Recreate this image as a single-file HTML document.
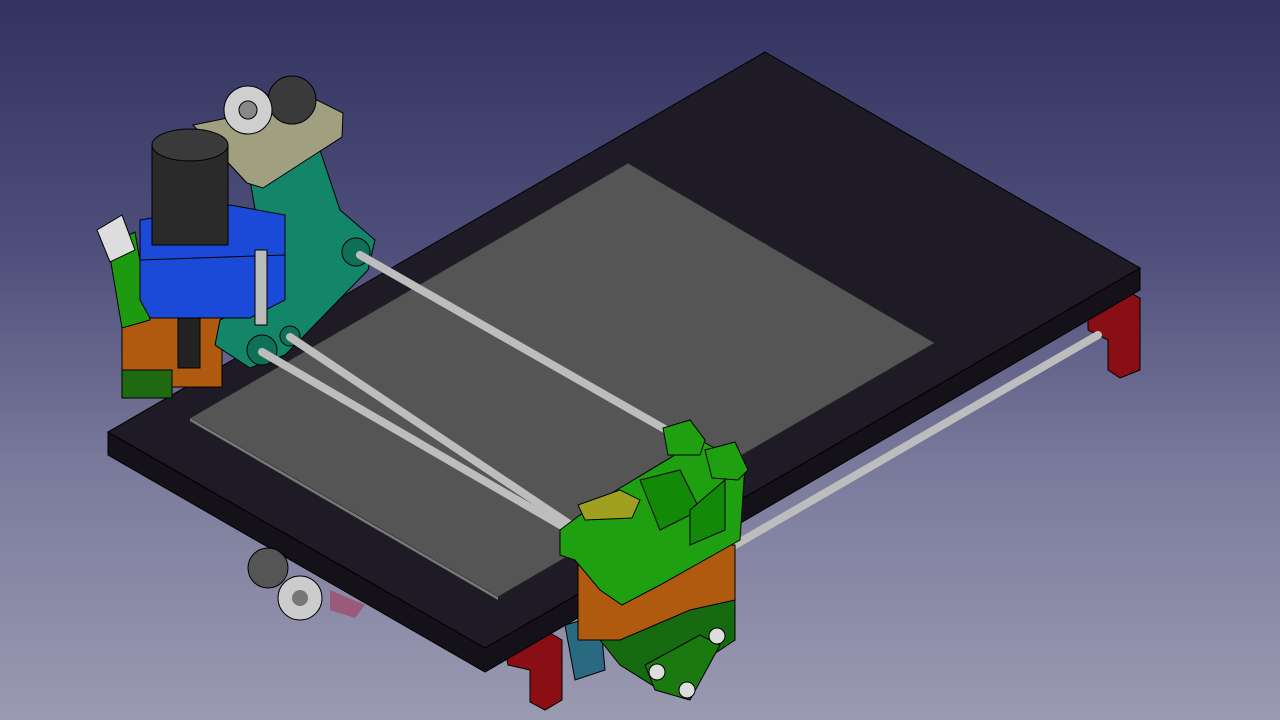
<!DOCTYPE html>
<html><head><meta charset="utf-8"><style>
html,body{margin:0;padding:0;width:1280px;height:720px;overflow:hidden}
body{background:linear-gradient(#33335f 0%,#4f4f7c 35%,#7a7a9c 65%,#9a9ab2 100%)}
svg{position:absolute;left:0;top:0}
</style></head><body>
<svg width="1280" height="720" viewBox="0 0 1280 720" xmlns="http://www.w3.org/2000/svg">
<polygon points="1088,300 1125,290 1140,298 1140,370 1120,378 1108,370 1108,340 1088,330" fill="#8a0f14" stroke="#000"/>
<polygon points="505,650 545,630 562,640 562,700 545,710 530,702 530,670 508,665" fill="#8a0f14" stroke="#000"/>
<polygon points="565,625 600,615 605,670 575,680" fill="#2a6a80" stroke="#000"/>
<!-- slab -->
<polygon points="108,432 485,648 1140,268 1140,290 485,672 108,455" fill="#141218" stroke="#000"/>
<polygon points="765,52 1140,268 485,648 108,432" fill="#1f1b26" stroke="#000"/>
<polygon points="628,163 935,343 498,597 190,418" fill="#555555" stroke="#222"/>
<polygon points="190,418 498,597 498,600 190,421" fill="#777"/>
<g stroke="#000" stroke-width="1">
<!-- left blocks -->
<rect x="122" y="305" width="100" height="82" fill="#b05a10"/>
<rect x="122" y="370" width="50" height="28" fill="#1f6a10"/>
<polygon points="108,245 135,232 150,320 122,328" fill="#1e9a10"/>
<polygon points="97,230 122,215 135,250 110,262" fill="#ddd"/>
<!-- teal tower -->
<polygon points="250,180 320,150 340,210 375,240 368,270 300,340 285,355 250,368 215,345 220,320 248,305 262,250" fill="#13866a"/>
<circle cx="356" cy="252" r="14" fill="#0f7058"/>
<circle cx="262" cy="350" r="15" fill="#0f7058"/>
<circle cx="290" cy="336" r="10" fill="#0f7058"/>
<!-- beige plate -->
<polygon points="193,125 317,100 343,113 342,137 263,188 247,183" fill="#a0a080"/>
<circle cx="292" cy="100" r="24" fill="#3a3a3a"/>
<circle cx="248" cy="110" r="24" fill="#cfcfcf"/>
<circle cx="248" cy="110" r="9" fill="#888"/>
<!-- blue -->
<polygon points="140,300 140,220 230,205 285,215 285,300 250,318 150,318" fill="#1c4ad8"/>
<line x1="140" y1="260" x2="285" y2="255"/>
<rect x="152" y="145" width="76" height="100" fill="#2a2a2a"/>
<ellipse cx="190" cy="145" rx="38" ry="16" fill="#3a3a3a"/>
<rect x="178" y="318" width="22" height="50" fill="#222"/>
<rect x="255" y="250" width="12" height="75" fill="#bbb"/>
</g>
<g stroke="#bdbdbd" stroke-width="8" stroke-linecap="round">
<line x1="360" y1="255" x2="740" y2="472"/>
<line x1="262" y1="352" x2="600" y2="548"/>
<line x1="290" y1="337" x2="638" y2="570"/>
<line x1="1098" y1="335" x2="735" y2="545"/>
</g>
<circle cx="268" cy="568" r="20" fill="#555" stroke="#000"/>
<circle cx="300" cy="598" r="22" fill="#ccc" stroke="#000"/>
<circle cx="300" cy="598" r="8" fill="#777"/>
<polygon points="330,590 365,605 355,618 330,610" fill="#9a5a7a"/>
<!-- right carriage -->
<g stroke="#000" stroke-width="1">
<rect x="578" y="545" width="157" height="95" fill="#b05a10"/>
<polygon points="600,640 620,665 660,690 735,640 735,600 690,610 620,640" fill="#166a10"/>
<polygon points="645,665 700,635 720,645 690,700 655,690" fill="#1a7a10"/>
<circle cx="717" cy="636" r="8" fill="#ddd"/>
<circle cx="657" cy="672" r="8" fill="#ddd"/>
<circle cx="687" cy="690" r="8" fill="#ddd"/>
<polygon points="560,530 600,500 700,440 745,465 740,540 660,585 622,605 600,590 575,560 560,555" fill="#1ea010"/>
<polygon points="663,428 690,420 705,440 700,455 668,455" fill="#1ea010"/>
<polygon points="705,450 735,442 748,470 738,480 712,478" fill="#1ea010"/>
<polygon points="578,505 620,490 640,500 632,518 585,520" fill="#a0a020"/>
<polygon points="640,480 680,470 700,510 660,530" fill="#128a08"/>
<polygon points="690,510 725,480 725,530 690,545" fill="#128a08"/>
</g>
</svg>
</body></html>
